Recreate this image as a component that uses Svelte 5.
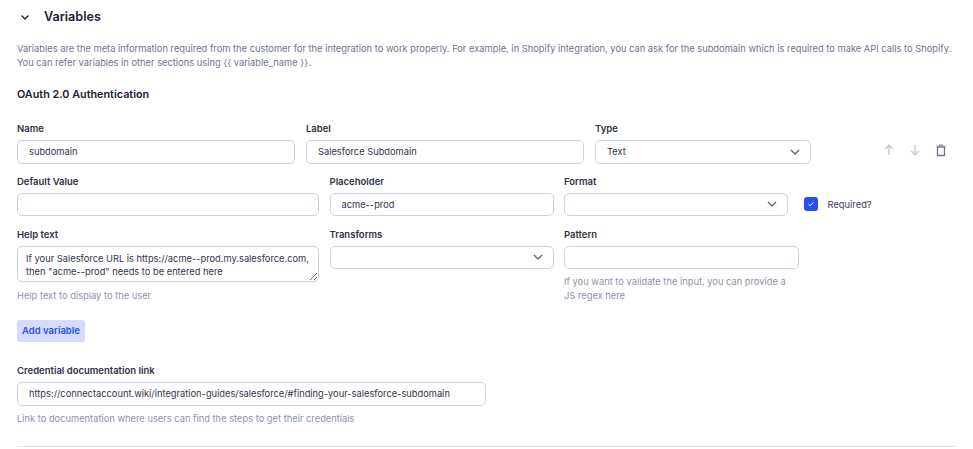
<script>
  const chevron = 'M4 6l4 4 4-4';
</script>

<div class="page">
  <header class="head">
    <svg class="toggle" viewBox="0 0 12 12" width="12" height="12" fill="none" stroke="#1e2033" stroke-width="1.3"><path d="M2.500 4.500 6 8l3.500-3.500" /></svg>
    <h2>Variables</h2>
  </header>
  <p class="intro">Variables are the meta information required from the customer for the integration to work properly. For example, in Shopify integration, you can ask for the subdomain which is required to make API calls to Shopify. You can refer variables in other sections using {'{{'} variable_name {'}}'}.</p>
  <h3>OAuth 2.0 Authentication</h3>

  <div class="row row1">
    <div class="field"><span class="label">Name</span><input value="subdomain" /></div>
    <div class="field"><span class="label">Label</span><input value="Salesforce Subdomain" /></div>
    <div class="field">
      <span class="label">Type</span>
      <div class="select"><span>Text</span><svg viewBox="0 0 16 16" width="16" height="16" fill="none" stroke="#5f6480" stroke-width="1.4"><path d={chevron} /></svg></div>
    </div>
    <div class="actions">
      <svg viewBox="0 0 14 14" width="14" height="14" fill="none" stroke="#c3c6d6" stroke-width="1.3"><path d="M7 12V2.500M3.200 6 7 2.200 10.800 6" /></svg>
      <svg viewBox="0 0 14 14" width="14" height="14" fill="none" stroke="#c3c6d6" stroke-width="1.3"><path d="M7 2v9.500M3.200 8 7 11.800 10.800 8" /></svg>
      <svg viewBox="0 0 14 14" width="14" height="14" fill="none" stroke="#6b7090" stroke-width="1.300"><path d="M3.500 4h7v8.500h-7z" /><path d="M2.500 2.800h9V4h-9zM5 2.800V1.500h4v1.300" fill="#8e92ab" stroke="none" /></svg>
    </div>
  </div>

  <div class="row row2">
    <div class="field"><span class="label">Default Value</span><input /></div>
    <div class="field"><span class="label">Placeholder</span><input value="acme--prod" /></div>
    <div class="field">
      <span class="label">Format</span>
      <div class="select"><span></span><svg viewBox="0 0 16 16" width="16" height="16" fill="none" stroke="#5f6480" stroke-width="1.4"><path d={chevron} /></svg></div>
    </div>
    <div class="check">
      <span class="box"><svg viewBox="0 0 14 14" width="14" height="14" fill="none" stroke="#fff" stroke-width="1"><path d="M4.500 7.200 6.200 8.800 9.500 5.200" /></svg></span>
      <span class="check-label">Required?</span>
    </div>
  </div>

  <div class="row row3">
    <div class="field">
      <span class="label">Help text</span>
      <textarea value={'If your Salesforce URL is https://acme--prod.my.salesforce.com, then "acme--prod" needs to be entered here'}></textarea>
      <p class="hint">Help text to display to the user</p>
    </div>
    <div class="field">
      <span class="label">Transforms</span>
      <div class="select"><span></span><svg viewBox="0 0 16 16" width="16" height="16" fill="none" stroke="#5f6480" stroke-width="1.4"><path d={chevron} /></svg></div>
    </div>
    <div class="field">
      <span class="label">Pattern</span>
      <input />
      <p class="hint pattern-hint">If you want to validate the input, you can provide a JS regex here</p>
    </div>
  </div>

  <button class="add">Add variable</button>

  <div class="field cred">
    <span class="label">Credential documentation link</span>
    <input value="https://connectaccount.wiki/integration-guides/salesforce/#finding-your-salesforce-subdomain" />
    <p class="hint">Link to documentation where users can find the steps to get their credentials</p>
  </div>
  <hr />
</div>

<style>
  :global(body) { margin: 0; background: #fff; overflow: hidden; }
  .page {
    width: 938px;
    height: 449px;
    padding: 0 18px 0 17px;
    font-family: Inter, "Liberation Sans", sans-serif;
    color: #1e2033;
    overflow: hidden;
  }
  .head { display: flex; align-items: center; gap: 13px; height: 34px; padding-left: 2px; }
  h2 { margin: 0; font-size: 12.600px; font-weight: 600; line-height: 34px; }
  .intro { margin: 7.500px 0 0; font-size: 9.320px; line-height: 14px; color: #6f7391; }
  h3 { margin: 17px 0 0; font-size: 10.800px; font-weight: 600; line-height: 16px; }
  .row { display: grid; gap: 11px; }
  .row1 { margin-top: 20px; grid-template-columns: 278px 278px 216px 1fr; height: 45px; }
  .row2 { margin-top: 8px; grid-template-columns: 302px 224px 224px 1fr; height: 45px; gap: 10.500px; }
  .row3 { margin-top: 8px; grid-template-columns: 302px 224px 235px; gap: 10.500px; }
  .field { display: flex; flex-direction: column; min-width: 0; }
  .label { font-size: 9.500px; font-weight: 600; line-height: 12px; height: 12px; margin-bottom: 5px; color: #2f3147; }
  input, .select, textarea {
    box-sizing: border-box;
    height: 24px;
    width: 100%;
    border: 1px solid #cdd1e8;
    border-radius: 5px;
    padding: 0 11px;
    font: 9.300px/13px Inter, "Liberation Sans", sans-serif;
    color: #33354a;
    background: #fff;
    outline: none;
    margin: 0;
  }
  .row2 input, .row2 .select, .row3 input, .row3 .select { height: 23px; }
  .select { display: flex; align-items: center; justify-content: space-between; padding-right: 7px; }
  textarea { height: 36px; padding: 5px 3px 5px 8px; display: block; overflow: hidden; }
  .hint { margin: 7px 0 0; font-size: 9.320px; line-height: 14px; color: #8e92ab; }
  .pattern-hint { margin-top: 6px; }
  .actions { display: flex; align-items: center; gap: 12px; padding: 20px 0 0 60px; height: 14px; }
  .check { display: flex; align-items: center; gap: 10px; height: 23px; margin-top: 17px; padding-left: 5px; }
  .box { width: 14px; height: 14px; background: #2a4ff0; border-radius: 3px; display: flex; }
  .check-label { font-size: 9.350px; color: #3b3d52; }
  .add {
    display: block;
    margin: 17px 0 0;
    width: 68px;
    height: 22px;
    padding: 0;
    border: 0;
    border-radius: 3px;
    background: #d4dcfb;
    color: #2a4ff0;
    font: 600 9.500px Inter, "Liberation Sans", sans-serif;
  }
  .cred { margin-top: 23px; }
  .cred input { width: 469px; }
  .cred .hint { margin-top: 6px; }
  hr { margin: 20px 0 0; border: 0; border-top: 1px solid #dfe1ef; }
</style>
